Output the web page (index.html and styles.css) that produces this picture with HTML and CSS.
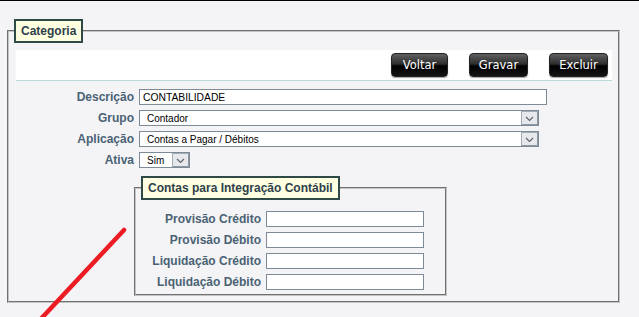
FILE: index.html
```html
<!DOCTYPE html>
<html lang="pt-BR">
<head>
    <meta charset="UTF-8">
    <title>Categoria</title>
    <link rel="stylesheet" href="styles.css">
</head>
<body>
    <fieldset class="panel">
        <legend class="panel-title">Categoria</legend>
        <div class="panel-body">
            <!-- Barra de botões -->
            <div class="toolbar">
                <button class="btn btn-short">Voltar</button>
                <button class="btn">Gravar</button>
                <button class="btn">Excluir</button>
            </div>

            <div class="form-grid">
                <label>Descrição</label>
                <input class="field field-desc" type="text" value="CONTABILIDADE">

                <label>Grupo</label>
                <div class="select select-wide">
                    <select><option>Contador</option></select>
                    <span class="select-arrow"><svg width="9" height="6" viewBox="0 0 9 6"><path d="M1 1l3.5 3.5L8 1" fill="none" stroke="#5a6068" stroke-width="1.1"/></svg></span>
                </div>

                <label>Aplicação</label>
                <div class="select select-wide">
                    <select><option>Contas a Pagar / Débitos</option></select>
                    <span class="select-arrow"><svg width="9" height="6" viewBox="0 0 9 6"><path d="M1 1l3.5 3.5L8 1" fill="none" stroke="#5a6068" stroke-width="1.1"/></svg></span>
                </div>

                <label>Ativa</label>
                <div class="select select-small">
                    <select><option>Sim</option><option>Não</option></select>
                    <span class="select-arrow"><svg width="9" height="6" viewBox="0 0 9 6"><path d="M1 1l3.5 3.5L8 1" fill="none" stroke="#5a6068" stroke-width="1.1"/></svg></span>
                </div>
            </div>

            <!-- Contas contábeis -->
            <fieldset class="panel panel-inner">
                <legend class="panel-title">Contas para Integração Contábil</legend>
                <div class="form-grid form-grid-inner">
                    <label>Provisão Crédito</label>
                    <input class="field" type="text">
                    <label>Provisão Débito</label>
                    <input class="field" type="text">
                    <label>Liquidação Crédito</label>
                    <input class="field" type="text">
                    <label>Liquidação Débito</label>
                    <input class="field" type="text">
                </div>
            </fieldset>
        </div>
    </fieldset>

    <svg class="mark" width="639" height="317" viewBox="0 0 639 317">
        <line x1="124" y1="230" x2="38" y2="322" stroke="#ec1c24" stroke-width="4.5" stroke-linecap="round"/>
    </svg>
</body>
</html>
```

FILE: styles.css
```css
html, body {
    margin: 0;
    height: 100%;
}
body {
    font-family: "Liberation Sans", Arial, sans-serif;
    background-color: #f4f4f6;
    border-top: 1px solid #000;
    box-sizing: border-box;
    overflow: hidden;
}
.panel {
    margin: 18px 19px 0 7px;
    padding: 0;
    border: 2px groove #c4c4c4;
    min-width: 0;
}
.panel-title {
    margin-left: 5px;
    padding: 0 5px;
    border: 2px solid #2f4a46;
    background-color: #ffffe1;
    color: #2f3f4c;
    font-weight: bold;
    font-size: 12px;
    line-height: 20px;
}
.panel-body {
    padding: 7px 6px 5px 7px;
}
.toolbar {
    display: flex;
    justify-content: flex-end;
    align-items: center;
    gap: 21px;
    height: 30px;
    padding-right: 4px;
    background-color: #fff;
    border-bottom: 1px solid #bcdcdc;
}
.btn {
    width: 59px;
    height: 24px;
    padding: 0;
    font-family: "DejaVu Sans", Verdana, sans-serif;
    font-size: 11.5px;
    color: #fff;
    background: linear-gradient(#606060, #2e2e2e 45%, #000 55%, #141414);
    border: 1px solid #222;
    border-radius: 4px;
    box-shadow: 0 1px 1px rgba(0, 0, 0, 0.35);
    cursor: pointer;
}
.btn-short {
    width: 57px;
}
.form-grid {
    display: grid;
    grid-template-columns: 118px auto;
    grid-auto-rows: 16px;
    column-gap: 5px;
    row-gap: 5px;
    justify-items: start;
    margin-top: 8px;
}
.form-grid label {
    justify-self: end;
    font-size: 12px;
    font-weight: bold;
    color: #4a6274;
    line-height: 16px;
    white-space: nowrap;
}
.field {
    box-sizing: border-box;
    height: 16px;
    width: 158px;
    margin: 0;
    padding: 0 3px;
    border: 1px solid #7d8a97;
    background: #fff;
    font-family: "Liberation Sans", Arial, sans-serif;
    font-size: 10.3px;
    color: #000;
}
.field-desc {
    width: 408px;
}
.select {
    box-sizing: border-box;
    display: flex;
    height: 16px;
    border: 1px solid #7d8a97;
    background: #fff;
}
.select-wide {
    width: 400px;
}
.select-small {
    width: 51px;
}
.select select {
    flex: 1;
    min-width: 0;
    appearance: none;
    -webkit-appearance: none;
    border: 0;
    margin: 0;
    padding: 0 0 0 7px;
    background: transparent;
    font-family: "Liberation Sans", Arial, sans-serif;
    font-size: 10px;
    color: #000;
    height: 14px;
    outline: none;
}
.select-arrow {
    box-sizing: border-box;
    width: 17px;
    height: 14px;
    display: flex;
    align-items: center;
    justify-content: center;
    padding-top: 2px;
    background: #e6e8ec;
    border: 1px solid #a2aab3;
    border-right-color: #8e98a2;
    border-bottom-color: #8e98a2;
}
.panel-inner {
    margin: 8px 0 0 118px;
    width: 313px;
    box-sizing: border-box;
}
.form-grid-inner {
    grid-template-columns: 125px 158px;
    margin: 0;
    padding: 11px 0 4px 0;
}
.mark {
    position: absolute;
    left: 0;
    top: 0;
    pointer-events: none;
}
```
